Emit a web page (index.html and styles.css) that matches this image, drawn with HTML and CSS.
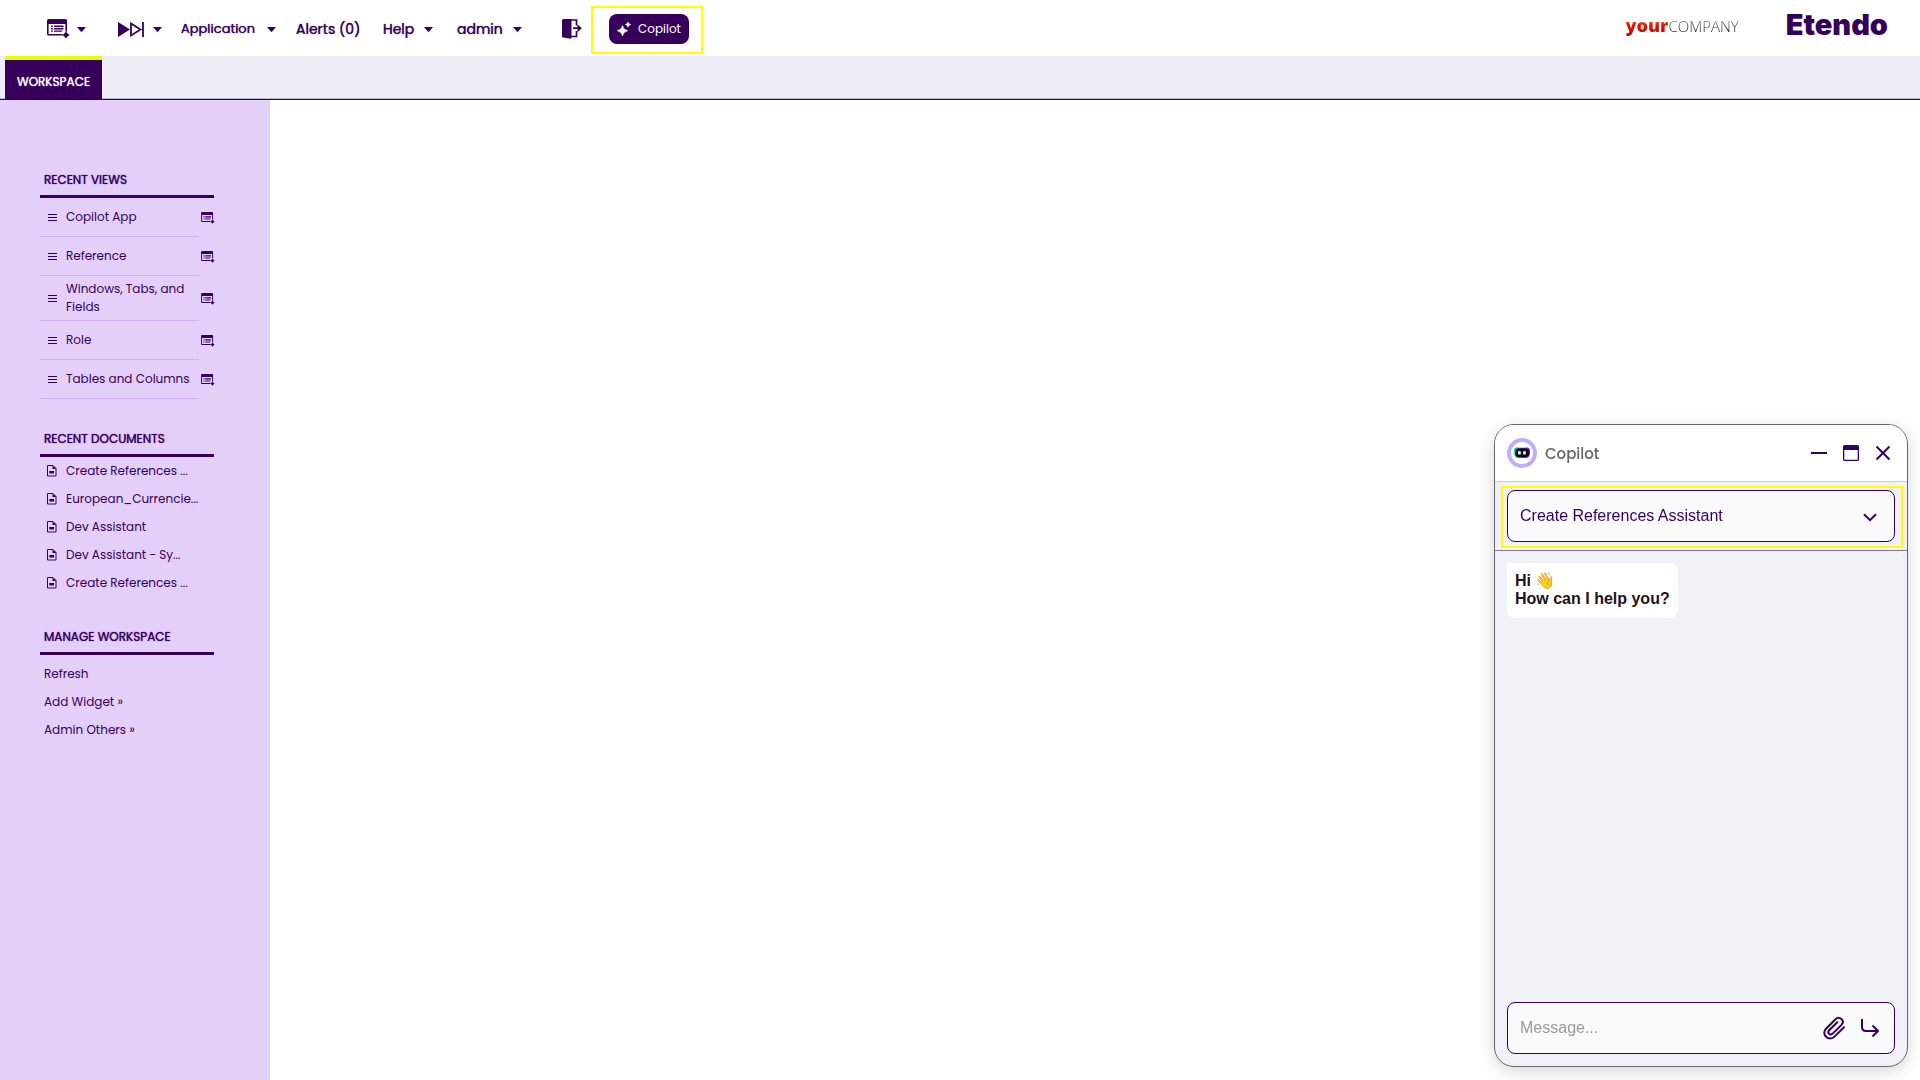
FILE: index.html
```html
<!DOCTYPE html>
<html lang="en">
<head>
<meta charset="utf-8">
<title>Etendo</title>
<link rel="stylesheet" href="styles.css">
</head>
<body>
<svg class="sprite" aria-hidden="true">
  <symbol id="i-window" viewBox="0 0 23 20"><path fill="currentColor" fill-rule="evenodd" d="M0 1.500Q0 0 1.500 0H18.500Q20 0 20 1.500V13.500L19 12.500H18.400V5H1.600V14.900H15.500V16.500H1.500Q0 16.500 0 15ZM4 6.600H5.800V8H4ZM7 6.600H16.500V8H7ZM4 9H5.800V10.400H4ZM7 9H16.500V10.400H7ZM4 11.400H5.800V12.700H4ZM7 11.400H15.200V12.700H7ZM18.800 12.800L20.600 14.500L22.600 16L20.600 17.600L19 19.600L17.300 17.600L15.400 16L17.300 14.500Z"/></symbol>
  <symbol id="i-caret" viewBox="0 0 9 5"><path fill="currentColor" d="M0 0H9L5.200 4.600Q4.500 5.200 3.800 4.600Z"/></symbol>
  <symbol id="i-doc" viewBox="0 0 10 12"><path fill="none" stroke="currentColor" d="M.5.500H6L9 3.500V11H.5Z"/><path fill="currentColor" d="M5.500.500L9.500 4H5.500ZM2.300 6H7V8.600H2.300Z"/></symbol>
  <symbol id="i-menu" viewBox="0 0 9 7"><path stroke="currentColor" d="M0 .5H9M0 3.500H9M0 6.500H9"/></symbol>
</svg>

<header class="topbar">
  <nav class="menu" aria-label="Main">
    <button class="item item-create" aria-label="Create new"><svg class="ic-window"><use href="#i-window"/></svg><svg class="caret"><use href="#i-caret"/></svg></button>
    <button class="item item-launch" aria-label="Quick launch">
      <svg class="ic-launch" viewBox="0 0 26 15"><path fill="currentColor" d="M0 0L12 7.500L0 15Z"/><path fill="none" stroke="currentColor" stroke-width="1.800" d="M13 1.600L22.500 7.500L13 13.400ZM25 0V15"/></svg>
      <svg class="caret"><use href="#i-caret"/></svg></button>
    <button class="item item-app">Application<svg class="caret"><use href="#i-caret"/></svg></button>
    <button class="item item-alerts">Alerts (0)</button>
    <button class="item item-help">Help<svg class="caret"><use href="#i-caret"/></svg></button>
    <button class="item item-user">admin<svg class="caret"><use href="#i-caret"/></svg></button>
    <button class="item item-logout" aria-label="Log out"><svg class="ic-logout" viewBox="0 0 20 20"><path fill="currentColor" d="M0 1.500Q0 0 1.500 0H8.500Q9.500 0 9.500 1V18.500Q9.500 20 8.500 19.800L1 18.600Q0 18.500 0 17.500Z"/><path fill="none" stroke="currentColor" stroke-width="1.700" d="M8 1H14.500V6.500M14.500 12V17.500H8M11 9.200H18.500"/><path fill="currentColor" d="M15.500 5.200L19.800 9.200L15.500 13.200Z"/></svg></button>
    <div class="mark mark-copilot">
      <button class="copilot-btn"><svg class="ic-spark" viewBox="0 0 14 14"><path fill="currentColor" d="M5.500 3.500Q6.300 7.900 10.800 8.700Q6.300 9.500 5.500 14Q4.700 9.500 .2 8.700Q4.700 7.900 5.500 3.500ZM11 0Q11.400 2.200 13.700 2.600Q11.400 3 11 5.300Q10.600 3 8.300 2.600Q10.600 2.200 11 0Z" stroke="currentColor" stroke-width=".6"/></svg>Copilot</button>
    </div>
  </nav>
  <div class="brands">
    <span class="company"><b>your</b><span>COMPANY</span></span>
    <span class="etendo">Etendo</span>
  </div>
</header>

<div class="tabs" role="tablist"><button class="tab" role="tab" aria-selected="true">WORKSPACE</button></div>

<div class="main">
  <aside class="sidebar">
    <section>
      <h2>RECENT VIEWS</h2>
      <ul class="views">
        <li><a href="#"><svg class="ic-menu"><use href="#i-menu"/></svg><span>Copilot App</span></a><button aria-label="New Copilot App"><svg><use href="#i-window"/></svg></button></li>
        <li><a href="#"><svg class="ic-menu"><use href="#i-menu"/></svg><span>Reference</span></a><button aria-label="New Reference"><svg><use href="#i-window"/></svg></button></li>
        <li><a href="#"><svg class="ic-menu"><use href="#i-menu"/></svg><span>Windows, Tabs, and Fields</span></a><button aria-label="New Windows, Tabs, and Fields"><svg><use href="#i-window"/></svg></button></li>
        <li><a href="#"><svg class="ic-menu"><use href="#i-menu"/></svg><span>Role</span></a><button aria-label="New Role"><svg><use href="#i-window"/></svg></button></li>
        <li><a href="#"><svg class="ic-menu"><use href="#i-menu"/></svg><span>Tables and Columns</span></a><button aria-label="New Tables and Columns"><svg><use href="#i-window"/></svg></button></li>
      </ul>
    </section>
    <section>
      <h2>RECENT DOCUMENTS</h2>
      <ul class="docs">
        <li><a href="#"><svg class="ic-doc"><use href="#i-doc"/></svg>Create References ...</a></li>
        <li><a href="#"><svg class="ic-doc"><use href="#i-doc"/></svg>European_Currencie...</a></li>
        <li><a href="#"><svg class="ic-doc"><use href="#i-doc"/></svg>Dev Assistant</a></li>
        <li><a href="#"><svg class="ic-doc"><use href="#i-doc"/></svg>Dev Assistant - Sy...</a></li>
        <li><a href="#"><svg class="ic-doc"><use href="#i-doc"/></svg>Create References ...</a></li>
      </ul>
    </section>
    <section>
      <h2>MANAGE WORKSPACE</h2>
      <ul class="manage">
        <li><a href="#">Refresh</a></li>
        <li><a href="#">Add Widget »</a></li>
        <li><a href="#">Admin Others »</a></li>
      </ul>
    </section>
  </aside>
  <main class="workspace"></main>
</div>

<section class="chat" aria-label="Copilot">
  <header class="chat-head">
    <svg class="avatar" viewBox="0 0 30 30">
      <defs><linearGradient id="visor"><stop offset="0" stop-color="#00e5d0"/><stop offset=".35" stop-color="#1b6a78"/><stop offset=".65" stop-color="#5a18a8"/><stop offset="1" stop-color="#d020e8"/></linearGradient></defs>
      <circle cx="15" cy="15" r="13" fill="#fff" stroke="#bcb0fb" stroke-width="4"/>
      <path fill="url(#visor)" d="M7 12.500Q7 9.300 10.500 9.600Q15 10 19.500 9.600Q23 9.300 23 12.500V14.500Q22.800 20 18.500 20H11.500Q7.200 20 7 14.500Z"/>
      <rect x="8" y="10.500" width="14.500" height="8.500" rx="4" fill="#0c0820"/>
      <rect x="11.200" y="13" width="2.600" height="3.600" rx="1.200" fill="#fff"/><rect x="16.200" y="13" width="2.600" height="3.600" rx="1.200" fill="#fff"/>
    </svg>
    <h1>Copilot</h1>
    <div class="win-controls">
      <button aria-label="Minimize"><svg viewBox="0 0 16 16"><path d="M0 8H16" stroke="currentColor" stroke-width="2"/></svg></button>
      <button aria-label="Maximize"><svg viewBox="0 0 16 16"><path fill="currentColor" fill-rule="evenodd" d="M1.500 0H14.500Q16 0 16 1.500V14.500Q16 16 14.500 16H1.500Q0 16 0 14.500V1.500Q0 0 1.500 0ZM1.300 5V14.700H14.700V5Z"/></svg></button>
      <button aria-label="Close"><svg viewBox="0 0 16 16"><path d="M1.500 1.500L14.500 14.500M14.500 1.500L1.500 14.500" stroke="currentColor" stroke-width="2"/></svg></button>
    </div>
  </header>
  <div class="chat-picker">
    <div class="mark mark-select">
      <select aria-label="Assistant"><option>Create References Assistant</option></select>
      <svg class="chevron" viewBox="0 0 14 9"><path d="M1 1.200L7 7.200L13 1.200" fill="none" stroke="currentColor" stroke-width="2"/></svg>
    </div>
  </div>
  <div class="chat-log"><p class="bubble">Hi 👋<br>How can I help you?</p></div>
  <form class="composer">
    <input type="text" placeholder="Message..." aria-label="Message">
    <button type="button" aria-label="Attach file"><svg class="ic-clip" viewBox="0 0 22 24"><path fill="none" stroke="currentColor" stroke-width="2" stroke-linecap="round" d="M21 11.300L11.500 20.600C5.800 26 -2.300 18.300 3 12.700L12.500 3.200C16.500 -.6 22.300 4.800 18.500 8.900L9.700 17.600C7 20 3.800 16.900 6.200 14.300L14.300 6.300"/></svg></button>
    <button type="submit" aria-label="Send"><svg class="ic-send" viewBox="0 0 18 18"><path fill="none" stroke="currentColor" stroke-width="2" d="M1 0V8Q1 12 5 12H16.500M11.500 6.500L17 12L11.500 17.500"/></svg></button>
  </form>
</section>
</body>
</html>
```
FILE: styles.css
```css
:root {
  --ink: #36005a;
  --lilac: #e4cff8;
  --mark: #ffff00;
  --ui: "Poppins", "Inter", sans-serif;
  --chat: "Liberation Sans", Arial, sans-serif;
}
* { box-sizing: border-box; }
body {
  margin: 0;
  min-height: 100vh;
  display: flex;
  flex-direction: column;
  background: #fff;
  color: var(--ink);
  font: 12px/18px var(--ui);
}
button, select, input { font: inherit; color: inherit; }
button { border: 0; padding: 0; background: none; cursor: pointer; }
a { color: inherit; text-decoration: none; }
ul { list-style: none; margin: 0; padding: 0; }
svg { display: block; flex: none; }
.sprite { position: absolute; width: 0; height: 0; }

.topbar {
  height: 56px;
  display: flex;
  justify-content: space-between;
  padding: 0 32px 0 47px;
}
.menu { display: flex; align-items: center; }
.item {
  display: flex;
  align-items: center;
  justify-content: space-between;
  padding-top: 2px;
  font-size: 14px;
  white-space: nowrap;
}
.item, .tab, .sidebar h2 { font-weight: 400; text-shadow: 0 0 1px currentColor; }
.caret { width: 9px; height: 5px; }
.ic-window { width: 23px; height: 20px; }
.ic-launch { width: 26px; height: 15px; }
.ic-logout { width: 20px; height: 20px; }
.item-create { width: 39px; margin-right: 32px; }
.item-launch { width: 44px; margin-right: 19px; }
.item-app { width: 95px; margin-right: 20px; font-size: 13px; }
.item-alerts { width: 68px; margin-right: 19px; }
.item-help { width: 50px; margin-right: 24px; }
.item-user { width: 65px; margin-right: 40px; }
.item-logout { margin-right: 9px; }
.mark { border: 2px solid var(--mark); }
.mark-copilot { padding: 6px 12px 8px 16px; margin-top: 4px; }
.copilot-btn {
  display: flex;
  align-items: center;
  justify-content: center;
  gap: 7px;
  width: 80px;
  height: 30px;
  border-radius: 8px;
  background: var(--ink);
  color: #fff;
  font-size: 12px;
}
.ic-spark { width: 14px; height: 14px; }
.brands { display: flex; align-items: center; gap: 47px; padding-bottom: 6px; }
.company { display: flex; align-items: baseline; font: 300 15px/24px "Open Sans", sans-serif; }
.company > * { color: transparent; background-clip: text; }
.company b { background-image: linear-gradient(#ff7a40 25%, #e01800 50%, #b00000); font-size: 18px; font-weight: 800; }
.company span { background-image: linear-gradient(#888 20%, #111 75%); }
.etendo { font: 900 29px/32px "Inter", sans-serif; }

.tabs {
  display: flex;
  height: 44px;
  padding-left: 5px;
  background: #efedf8;
  border-bottom: 1px solid var(--ink);
  box-shadow: inset 0 -1px #b9b6c4;
}
.tab {
  width: 97px;
  padding-top: 4px;
  border-top: 4px solid #e6ff00;
  background: var(--ink);
  color: #fff;
}

.main { flex: 1; display: flex; }
.sidebar {
  width: 270px;
  display: flex;
  flex-direction: column;
  gap: 23px;
  padding: 63px 55px 40px 40px;
  background: var(--lilac);
}
.workspace { flex: 1; }
.sidebar h2 {
  margin: 0 1px 0 0;
  padding: 8px 4px 6px;
  border-bottom: 3px solid var(--ink);
  font-size: 12px;
  line-height: 18px;
}
.views li { display: flex; align-items: center; }
.views a {
  display: flex;
  align-items: center;
  width: 159px;
  min-height: 39px;
  padding: 4px 0 4px 8px;
  gap: 9px;
  border-bottom: 1px solid #d0aef2;
}
.views button { margin-left: 2px; }
.views button svg { width: 14px; height: 12px; }
.ic-menu { width: 9px; height: 7px; }
.docs a { display: flex; align-items: center; height: 28px; padding-left: 7px; gap: 9px; white-space: nowrap; }
.ic-doc { width: 10px; height: 12px; }
.manage { padding-top: 5px; }
.manage a { display: flex; align-items: center; height: 28px; padding-left: 4px; }

.chat {
  position: fixed;
  right: 12px;
  bottom: 13px;
  width: 414px;
  height: 643px;
  display: flex;
  flex-direction: column;
  overflow: hidden;
  border: 1px solid #666;
  border-radius: 20px;
  background: #f2f1f8;
  box-shadow: 0 4px 16px rgba(0, 0, 0, .16);
  font: 16px/18px var(--chat);
}
.chat-head {
  display: flex;
  align-items: center;
  gap: 8px;
  height: 57px;
  padding: 0 16px 0 12px;
  background: #fff;
  border-bottom: 1px solid #cbc8dc;
}
.avatar { width: 30px; height: 30px; }
.chat-head h1 { margin: 0; padding-top: 2px; font: 500 15px/24px var(--ui); color: #666; }
.win-controls { display: flex; gap: 16px; margin-left: auto; }
.win-controls svg { width: 16px; height: 16px; }
.chat-picker { padding: 4px 4px 2px 6px; border-bottom: 1px solid #84759e; }
.mark-select { position: relative; padding: 2px 6px 4px 4px; }
.mark-select select {
  display: block;
  width: 100%;
  height: 52px;
  padding: 0 12px;
  appearance: none;
  border: 1px solid var(--ink);
  border-radius: 8px;
  background: #fafafa;
}
.chevron { position: absolute; right: 24px; top: 25px; width: 14px; height: 9px; pointer-events: none; }
.chat-log { flex: 1; padding: 12px; background: #f1f2f8; }
.bubble {
  width: fit-content;
  margin: 0;
  padding: 9px 8px 10px;
  border-radius: 0 8px 8px 8px;
  background: #fff;
  color: #1a1520;
  font-weight: 700;
}
.composer {
  display: flex;
  align-items: center;
  gap: 16px;
  height: 52px;
  margin: 0 12px 12px;
  padding: 0 15px 0 12px;
  border: 1px solid var(--ink);
  border-radius: 8px;
  background: #fafafa;
}
.composer input { flex: 1; min-width: 0; padding: 0; border: 0; outline: 0; background: none; }
.composer input::placeholder { color: #9b9b9b; opacity: 1; }
.ic-clip { width: 22px; height: 24px; }
.ic-send { width: 18px; height: 18px; }
```
